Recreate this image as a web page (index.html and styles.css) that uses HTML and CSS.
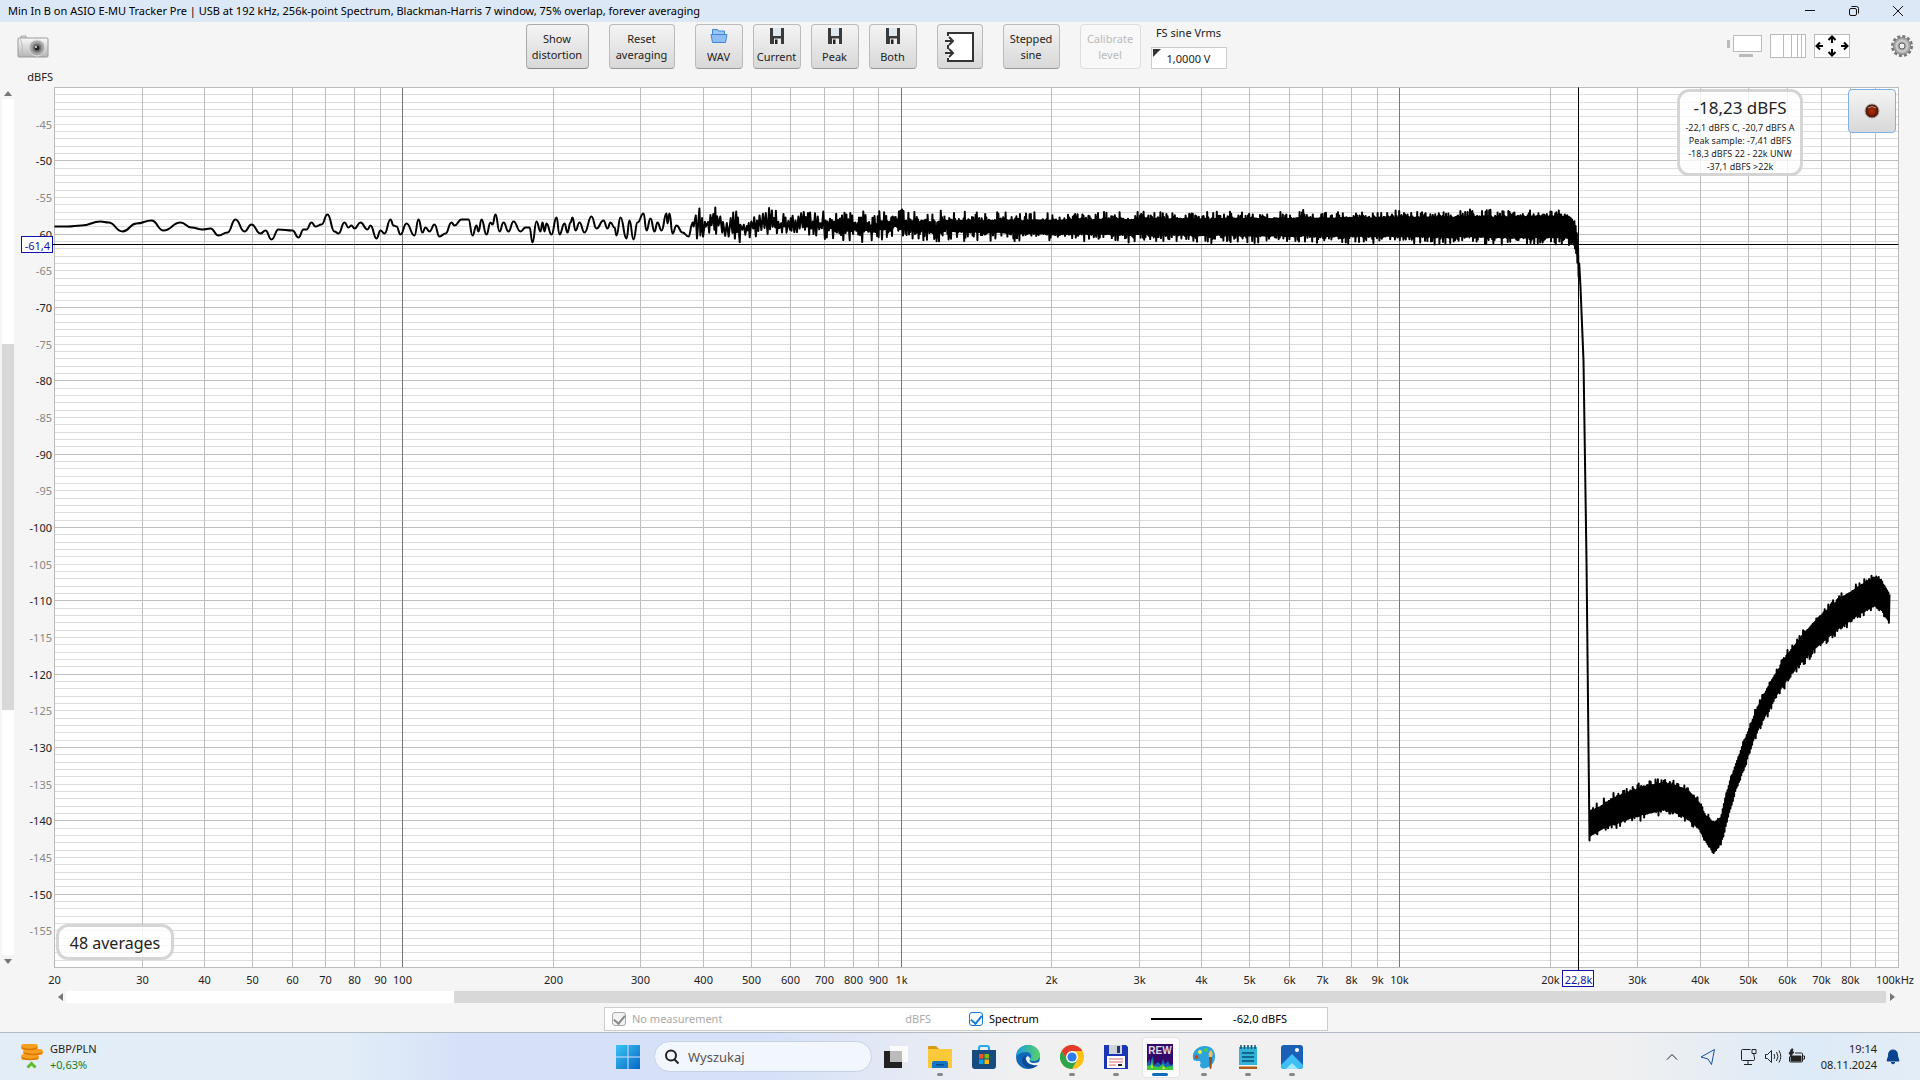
FILE: index.html
```html
<!DOCTYPE html>
<html lang="pl">
<head>
  <meta charset="UTF-8" />
  <meta name="viewport" content="width=device-width, initial-scale=1" />
  <title>RTA</title>
  <link rel="stylesheet" href="styles.css">
</head>
<body>
  <header class="titlebar">
    <span class="title">Min In B on ASIO E-MU Tracker Pre | USB at 192 kHz, 256k-point Spectrum, Blackman-Harris 7 window, 75% overlap, forever averaging</span>
    <div class="win-controls">
      <button aria-label="Minimise"><svg width="12" height="12"><path d="M1 5.5h10"/></svg></button>
      <button aria-label="Restore"><svg width="12" height="12"><rect x="1.5" y="3.5" width="7" height="7" rx="1.5"/><path d="M3.5 1.5h5a2 2 0 0 1 2 2v5"/></svg></button>
      <button aria-label="Close"><svg width="12" height="12"><path d="M1 1l10 10M11 1L1 11"/></svg></button>
    </div>
  </header>

  <div class="toolbar">
    <button class="plain camera" aria-label="Capture image">
      <svg width="32" height="24" viewBox="0 0 32 24">
        <defs><linearGradient id="cam" x1="0" y1="0" x2="0" y2="1"><stop offset="0" stop-color="#fafafa"/><stop offset="1" stop-color="#b4b4b4"/></linearGradient></defs>
        <path d="M4 3V1h5v2" fill="#ddd" stroke="#aaa"/>
        <rect x="1" y="3" width="30" height="19" rx="1" fill="url(#cam)" stroke="#999"/>
        <path d="M3 4c3 5 3 11 1 17" fill="none" stroke="#bbb"/>
        <circle cx="20" cy="13" r="8" fill="#aaa" stroke="#ddd"/>
        <circle cx="20" cy="13" r="5" fill="#777" stroke="#999"/>
        <circle cx="20" cy="13" r="2.5" fill="#222"/><circle cx="19" cy="12" r="1" fill="#eee"/>
      </svg>
    </button>

    <div class="tools">
      <button class="btn w-63 lit">Show<br>distortion</button>
      <button class="btn w-66">Reset<br>averaging</button>
      <div class="group">
        <button class="btn w-48">
          <svg width="18" height="16" viewBox="0 0 18 16"><path d="M2.500 7V1.500h5l1 1.500h6v4" fill="#9cc5f5" stroke="#3f87d8"/><path d="M1 6.500h16l-1.500 8h-13z" fill="#8fbcf3" stroke="#3f87d8"/></svg>
          WAV
        </button>
        <button class="btn w-48"><svg width="16" height="16"><use href="#save"/></svg>Current</button>
        <button class="btn w-48"><svg width="16" height="16"><use href="#save"/></svg>Peak</button>
        <button class="btn w-48"><svg width="16" height="16"><use href="#save"/></svg>Both</button>
      </div>
      <button class="btn w-46" aria-label="Input options">
        <svg width="32" height="32" viewBox="0 0 32 32" fill="none" stroke="#333" stroke-width="2">
          <path d="M4 2h25v28H4z" fill="#fff" stroke="none"/>
          <path d="M4 5V2h25v28H4v-3M4 14v4"/>
          <path d="M1 10h8M5 6l4 4-4 4M1 22h8M5 18l4 4-4 4"/>
        </svg>
      </button>
      <button class="btn w-57">Stepped<br>sine</button>
      <button class="btn w-61" disabled>Calibrate<br>level</button>
      <div class="field">
        <label for="fs">FS sine Vrms</label>
        <div class="spin"><input id="fs" type="text" value="1,0000 V"></div>
      </div>
    </div>

    <div class="views">
      <button class="plain" aria-label="Scrollbars">
        <svg width="35" height="24" viewBox="0 0 35 24"><rect x="6.500" y="1.500" width="28" height="16" fill="#fff" stroke="#bbb"/><path d="M0 6h3v8H0zM12 20h14v3H12z" fill="#bbb"/></svg>
      </button>
      <button class="plain" aria-label="Frequency axis">
        <svg width="36" height="24" viewBox="0 0 36 24" stroke="#bbb"><rect x=".5" y=".5" width="35" height="23" fill="#fff"/><path d="M13.500 0v24M21.500 0v24M27.500 0v24M31.500 0v24"/></svg>
      </button>
      <button class="plain" aria-label="Graph limits">
        <svg width="36" height="24" viewBox="0 0 36 24"><rect x=".5" y=".5" width="35" height="23" fill="#fff" stroke="#bbb"/>
          <path d="M18 9V3M14.500 6L18 2.500 21.500 6M18 15v6M14.500 18l3.500 3.500 3.500-3.500M9 12H3M6 8.500L2.500 12 6 15.500M27 12h6M30 8.500l3.500 3.500-3.500 3.500" fill="none" stroke="#000" stroke-width="2"/></svg>
      </button>
      <button class="plain gear" aria-label="Settings">
        <svg width="24" height="24" viewBox="0 0 24 24">
          <circle cx="12" cy="12" r="9.500" fill="none" stroke="#777" stroke-width="3" stroke-dasharray="3 1.970"/>
          <circle cx="12" cy="12" r="8.500" fill="#a8a8a8" stroke="#888"/>
          <circle cx="12" cy="12" r="5.500" fill="none" stroke="#ccc" stroke-width="2"/>
          <circle cx="12" cy="12" r="3" fill="#eee" stroke="#666"/>
        </svg>
      </button>
    </div>
  </div>

  <main>
    <div class="vscroll">
      <button class="plain" aria-label="Scroll up"><svg width="8" height="5"><path d="M0 5l4-5 4 5z"/></svg></button>
      <div class="track"><div class="thumb"></div></div>
      <button class="plain" aria-label="Scroll down"><svg width="8" height="5"><path d="M0 0h8L4 5z"/></svg></button>
    </div>
    <div class="graph">
      <svg id="plot"></svg>
      <div class="readout">
        <strong>-18,23 dBFS</strong>
        <span>-22,1 dBFS C, -20,7 dBFS A</span>
        <span>Peak sample: -7,41 dBFS</span>
        <span>-18,3 dBFS 22 - 22k UNW</span>
        <span>-37,1 dBFS &gt;22k</span>
      </div>
      <button class="record" aria-label="Record">
        <svg width="16" height="16"><defs><radialGradient id="led"><stop offset="0" stop-color="#b03008"/><stop offset=".6" stop-color="#7d1c04"/><stop offset="1" stop-color="#3a0c02"/></radialGradient></defs><circle cx="8" cy="8" r="7" fill="url(#led)" stroke="#aaa"/><path d="M4 5q4-3 8 0" stroke="#a98" fill="none"/></svg>
      </button>
      <div class="averages">48 averages</div>
    </div>
  </main>

  <div class="hscroll">
    <button class="plain" aria-label="Scroll left"><svg width="5" height="8"><path d="M5 0v8L0 4z"/></svg></button>
    <div class="track"><div class="thumb"></div></div>
    <button class="plain" aria-label="Scroll right"><svg width="5" height="8"><path d="M0 0v8l5-4z"/></svg></button>
  </div>

  <div class="legend">
    <div class="trace off">
      <input type="checkbox" id="t1" checked disabled><label for="t1">No measurement</label>
      <span class="value">dBFS</span>
    </div>
    <div class="trace">
      <input type="checkbox" id="t2" checked><label for="t2">Spectrum</label>
      <i class="sample"></i>
      <span class="value">-62,0 dBFS</span>
    </div>
  </div>

  <footer class="taskbar">
    <a class="widget" href="#">
      <svg width="24" height="26" viewBox="0 0 24 26">
        <g fill="#f6a01e"><rect x="1" y="0" width="17" height="6" rx="3"/><rect x="3" y="5" width="20" height="6" rx="3"/><rect x="1" y="10" width="18" height="6" rx="3"/></g>
        <path d="M2 4q8 3 15 0M4 9q9 3 18 0M2 14q8 3 16 0" stroke="#dd7808" fill="none" stroke-width="1.500"/>
        <path d="M7.500 23.500l4-4 4 4" stroke="#5fbd2c" stroke-width="3" fill="none"/>
      </svg>
      <span>GBP/PLN<br><b>+0,63%</b></span>
    </a>

    <nav class="apps">
      <button aria-label="Start">
        <svg width="24" height="24"><defs><linearGradient id="win" x1="0" y1="0" x2="1" y2="1"><stop offset="0" stop-color="#3cc3f5"/><stop offset="1" stop-color="#0568c4"/></linearGradient></defs><path d="M0 0h11.500v11.500H0zM12.500 0H24v11.500H12.500zM0 12.500h11.500V24H0zM12.500 12.500H24V24H12.500z" fill="url(#win)"/></svg>
      </button>
      <label class="search">
        <svg width="16" height="16" fill="none" stroke="#222" stroke-width="2"><circle cx="7" cy="6.500" r="5"/><path d="M10.500 10.500l4 4"/></svg>
        <input type="text" placeholder="Wyszukaj" aria-label="Wyszukaj">
      </label>
      <button aria-label="Task view">
        <svg width="24" height="24"><path d="M0 6h18v17H0z" fill="#222"/><path d="M6 1h18v16H6z" fill="#fafafa"/><path d="M6 6h12v11H6z" fill="#bbb"/></svg>
      </button>
      <button class="open" aria-label="Explorer">
        <svg width="24" height="24"><path d="M0 2q0-1 1-1h7l3 3H0z" fill="#d79a10"/><path d="M0 4h23q1 0 1 1v17q0 1-1 1H1q-1 0-1-1z" fill="#fbc93a"/><path d="M4 23v-5q0-2 2-2h12q2 0 2 2v5z" fill="#1674c4"/><path d="M8 19h8v1.500H8z" fill="#0a4d8c"/></svg>
      </button>
      <button aria-label="Store">
        <svg width="24" height="24"><path d="M7 6V3q0-2 2-2h6q2 0 2 2v3" fill="none" stroke="#25a9e8" stroke-width="2"/><path d="M0 5h24v16q0 3-3 3H3q-3 0-3-3z" fill="#164b80"/><path d="M7 9h4.500v4.500H7z" fill="#f25022"/><path d="M12.500 9H17v4.500h-4.500z" fill="#7fba00"/><path d="M7 14.500h4.500V19H7z" fill="#00a4ef"/><path d="M12.500 14.500H17V19h-4.500z" fill="#ffb900"/></svg>
      </button>
      <button aria-label="Edge">
        <svg width="24" height="24"><defs><linearGradient id="edg"><stop offset="0" stop-color="#1a9de0"/><stop offset="1" stop-color="#57d26a"/></linearGradient></defs><circle cx="12" cy="12" r="12" fill="#1267b8"/><path d="M0 12C0 5 5 0 12 0s12 5 12 10c0 4-3 6-7 6-3 0-4-1-3-2 3-4 0-7-4-7C5 7 1 10 0 12z" fill="url(#edg)"/><path d="M10 10c-3 6 2 12 12 9 1-1 1 0 0 1-4 5-15 4-16-4 0-3 1-5 4-6z" fill="#0c4a94"/><path d="M14 14c-2 4 4 5 9 3v3c-6 1-12-1-13-6 0-3 3-4 4 0z" fill="#f0f3f8"/></svg>
      </button>
      <button class="open" aria-label="Chrome">
        <svg width="24" height="24"><circle cx="12" cy="12" r="12" fill="#fbc116"/><path d="M1.600 6A12 12 0 0 1 22.400 6H12l-5 9z" fill="#e33b2e"/><path d="M1.600 6A12 12 0 0 0 12 24l5.200-9H7z" fill="#2da44e"/><circle cx="12" cy="12" r="6" fill="#fff"/><circle cx="12" cy="12" r="4.600" fill="#2b7de9"/></svg>
      </button>
      <button class="open" aria-label="Total Commander">
        <svg width="24" height="24"><path d="M0 0h22l2 2v22H0z" fill="#1b35b5"/><path d="M5 0h13v9H5z" fill="#cdd3dd"/><path d="M13 1h3v7h-3z" fill="#28366e"/><path d="M3 11h18v12H3z" fill="#fff"/><path d="M5 14h14M5 17h14M5 20h7" stroke="#d66"/><path d="M14 20h4" stroke="#222" stroke-width="2"/></svg>
      </button>
      <button class="open active" aria-label="REW">
        <svg width="26" height="26"><path d="M0 0h26v26H0z" fill="#35096b"/><path d="M0 26v-7l3-4v5l3-8 1 9 4-3 3 3 2-6 2 5 3-3 2 4 3-1v6z" fill="#1566b8"/><path d="M0 26v-4l4-1 1-7 1 8 6 1 4-3 2 3 8-1v4z" fill="#42c83c"/><path d="M4 24l1-5 1 5zM15 25l2-3 1 3z" fill="#e8e02a"/><text x="13" y="10" text-anchor="middle" class="rew">REW</text></svg>
      </button>
      <button class="open" aria-label="Paint">
        <svg width="24" height="24"><path d="M13 1C5 1 0 7 1 13c0 3 3 3 5 3 3 0 3 2 2 4 0 3 3 4 6 3 6-2 9-6 9-12 0-6-4-10-10-10z" fill="#2ba3dc"/><circle cx="8" cy="7" r="2" fill="#e8f04a"/><circle cx="14" cy="5" r="2" fill="#52c94b"/><circle cx="4.500" cy="12" r="2" fill="#c9471c"/><path d="M19 5c2 2 2 5 1 7h-3c-1-3 0-5 2-7z" fill="#f0bd68"/><path d="M17 12h3l-.5 11q-1 2-2 0z" fill="#9a4c1c"/></svg>
      </button>
      <button class="open" aria-label="Notepad">
        <svg width="24" height="24"><path d="M3 2h18v19H3z" fill="#32b4d8"/><path d="M3 21h18v3H3z" fill="#b05d1a"/><path d="M3 20h18v1.500H3z" fill="#f2f2f2"/><path d="M5 0v4M8.500 0v4M12 0v4M15.500 0v4M19 0v4" stroke="#154f70" stroke-width="1.500"/><path d="M6 8h12M6 12h12M6 16h12" stroke="#11658a" stroke-width="2"/></svg>
      </button>
      <button class="open" aria-label="Photos">
        <svg width="24" height="24"><rect x="1" y="0" width="22" height="24" rx="3" fill="#1c5fb8"/><path d="M1 20L12 9l11 11q0 4-3 4H4q-3 0-3-4z" fill="#3fc0f5"/><path d="M12 18l-6 6h12z" fill="#a6e6ff"/><circle cx="17" cy="5" r="2" fill="#fff"/></svg>
      </button>
    </nav>

    <div class="tray">
      <button aria-label="Hidden icons"><svg width="12" height="8"><path d="M1 6.500l5-5 5 5"/></svg></button>
      <button aria-label="Location"><svg width="16" height="18" class="blue"><path d="M14.500 1.500L1 9l7 2 3.500 5.500z"/></svg></button>
      <div class="quick">
        <svg width="18" height="18"><path d="M10.500 1.500h-8q-1 0-1 1v9q0 1 1 1h11q1 0 1-1v-3M8 12.500v4M4 16.500h8M12 1.500h4v4h-4zM14 5.500v3"/></svg>
        <svg width="18" height="18"><path d="M1.500 6.500h2l4-4v12l-4-4h-2zM10 6q1.500 2.500 0 5M12.500 4q3 4.500 0 9M15 2.500q3.500 6 0 12"/></svg>
        <svg width="18" height="18"><path d="M1.500 9v4q0 1 1 1h11q1 0 1-1V6q0-1-1-1H7M14.500 8h2v3h-2"/><path d="M3 8h10v5H3z" fill="#222"/><path d="M3.500 1L1 6h2l-1 3 4-5H4l1-3z" fill="#222"/></svg>
      </div>
      <time>19:14<br>08.11.2024</time>
      <button aria-label="Notifications"><svg width="14" height="16" class="bell"><path d="M7 1C3 1 2.500 4 2.500 7L1 12h12l-1.500-5C11.500 4 11 1 7 1zM5 13.500h4L7 15z"/></svg></button>
    </div>
  </footer>

  <svg class="defs">
    <symbol id="save" viewBox="0 0 16 16"><path d="M1 0h14v16H1z" fill="#3a3a3a"/><path d="M4 0h8v8H4z" fill="#dfe8ee"/><path d="M5 10.500h7V16H5z" fill="#eee"/><path d="M6 11.500h2.500V16H6z" fill="#222"/></symbol>
  </svg>

  <script>
    (function(){
      const svg = document.getElementById("plot");
      const pad = { left: 40.5, right: 21.5, top: 17.5, bottom: 23.5 };
      const fMin = 20, fMax = 100000, dbTop = -40, dbBottom = -160;
      const cursor = { f: 22800, db: -61.4 };

      // Trace samples, on an 1844 x 880 plot
      const low = [0,139,13,139,27,138,46,134,54,135,68,144,82,136,97,133,109,143,126,135,137,140,148,142,156,141,
        164,148,173,145,181,132,190,144,197,137,206,146,211,143,217,152,224,142,238,143,244,150,249,142,252,142,
        257,135,261,139,267,137,273,127,280,144,284,146,290,135,294,140,297,138,300,141,306,135,313,142,316,138,
        322,151,326,143,330,146,336,132,339,138,342,139,346,147,352,136,360,148,364,132,368,145,371,140,375,144,
        380,137,385,149,391,146,397,135,400,138,407,132,414,132,418,148,422,138,424,144,427,132,432,147,436,135,
        438,137,441,127,445,144,449,135,454,144,459,134,466,144,471,140,475,140,478,155,482,134,486,144,488,135,
        490,144,492,136,497,147,502,130,505,147,510,136,513,145,516,135,518,130,521,143,525,135,530,145,537,129,
        542,141,549,133,553,141,556,135,560,140,562,148,566,130,572,151,575,133,579,152,583,135,589,126,592,143,
        596,131,600,144,603,135,607,143,612,126,613,136,615,126,618,146,622,138,628,145,634,149,638,136];
      // x, top, bottom, spike length
      const band = [[638,136,140,14],[690,136,140,14],[760,136,141,13],[850,135,142,11],[905,134,144,10],[1000,133,146,8],
        [1100,132,147,8],[1250,131,148,8],[1400,130,149,8],[1512,129,150,7],[1517,131,152,6],[1521,138,160,4],
        [1523,150,176,2],[1525,180,200,0]];
      const drop = [[1526,200],[1529,273],[1532,473],[1535,753]];
      const high = [[1535,724,748,6],[1547,719,741,7],[1559,711,736,6],[1580,703,729,6],[1595,698,725,6],[1609,696,722,6],
        [1622,699,725,6],[1634,704,731,5],[1645,716,742,4],[1652,730,754,4],[1659,736,766,4],[1667,730,754,3],
        [1672,706,735,3],[1680,680,705,3],[1689,656,682,3],[1699,630,652,5],[1706,614,637,5],[1719,590,612,6],
        [1735,565,588,6],[1752,543,568,6],[1769,526,553,5],[1785,512,540,5],[1802,501,528,5],[1820,491,518,4],
        [1827,494,522,4],[1835,507,535,3]];

      // Repeatable noise, so that a resize keeps the trace
      let seed = 1;
      function rnd(){
        seed = (seed * 16807) % 2147483647;
        return seed / 2147483647;
      }

      function noise(env, step){
        const pts = [];
        let i = 0, drift = 0;
        for(let x = env[0][0], up = true; x <= env[env.length-1][0]; x += step(x), up = !up){
          while(i < env.length-2 && x > env[i+1][0]) i++;
          const a = env[i], b = env[i+1], t = (x - a[0]) / (b[0] - a[0]);
          const mix = k => a[k] + (b[k] - a[k]) * t;
          const spike = mix(3) * Math.pow(rnd(), x < 850 ? 2 : 3);
          // the sparse end wanders, the dense end holds level
          drift = drift * .85 + (rnd() - .5) * (x < 900 ? 3 : .5);
          pts.push([x, drift + (up ? mix(1) - spike : mix(2) + spike)]);
        }
        return pts;
      }

      function draw(){
        seed = 77;
        const w = svg.clientWidth, h = svg.clientHeight;
        const pw = w - pad.left - pad.right, ph = h - pad.top - pad.bottom;
        const fx = f => pad.left + pw * Math.log10(f / fMin) / Math.log10(fMax / fMin);
        const dy = db => pad.top + ph * (dbTop - db) / (dbTop - dbBottom);
        const snap = v => Math.floor(v) + .5;
        const sx = x => (pad.left + x * pw / 1844).toFixed(1);
        const sy = y => (pad.top + y * ph / 880).toFixed(1);
        const right = pad.left + pw, bottom = pad.top + ph;
        let out = `<rect x="${pad.left}" y="${pad.top}" width="${pw}" height="${ph}" class="area"/>`;
        let labels = "";

        // Level lines
        for(let db = dbTop; db >= dbBottom; db--){
          const y = snap(dy(db));
          out += `<path d="M${pad.left} ${y}H${right}" class="${db % 10 ? "minor" : "major"}"/>`;
          if(db % 5 === 0 && db < dbTop && db > dbBottom)
            labels += `<text x="38" y="${y+4}" class="lv ${db % 10 ? "dim" : ""}">${db}</text>`;
        }
        // Frequency lines
        for(let dec = 10; dec < fMax; dec *= 10){
          for(let n = 1; n < 10; n++){
            const f = n * dec;
            if(f < fMin) continue;
            const x = snap(fx(f));
            out += `<path d="M${x} ${pad.top}V${bottom}" class="${n === 1 ? "decade" : "major"}"/>`;
            if(f !== 90000) labels += `<text x="${x}" y="${bottom+16}" class="fr">${f < 1000 ? f : f/1000 + "k"}</text>`;
          }
        }
        labels += `<text x="${w-6}" y="${bottom+16}" class="lv">100kHz</text><text x="39" y="11" class="lv">dBFS</text>`;
        out += `<rect x="${pad.left}" y="${pad.top}" width="${pw}" height="${ph}" class="frame"/>`;

        // Trace
        let d = `M${sx(low[0])} ${sy(low[1])}`;
        for(let i = 2; i < low.length; i += 2){
          const m = sx((low[i-2] + low[i]) / 2);
          d += `C${m} ${sy(low[i-1])} ${m} ${sy(low[i+1])} ${sx(low[i])} ${sy(low[i+1])}`;
        }
        const rest = noise(band, x => x < 850 ? (.5 + rnd()) * (1.6 - (x - 638) / 260) : .6)
          .concat(drop, noise(high, () => .6));
        d += rest.map(p => `L${sx(p[0])} ${sy(p[1])}`).join("");
        out += `<path d="${d}" class="spectrum"/>`;

        // Cursor
        const cx = snap(fx(cursor.f)), cy = snap(dy(cursor.db));
        out += `<path d="M${cx} ${pad.top}V${bottom+3}M39 ${cy}H${right}" class="cross"/>` + labels;
        out += `<rect x="7.5" y="${cy-8}" width="31" height="16" class="tag"/><text x="36" y="${cy+5}" class="lv blue">-61,4</text>`;
        out += `<rect x="${cx-16}" y="${bottom+3}" width="31" height="16" class="tag"/><text x="${cx}" y="${bottom+16}" class="fr blue">22,8k</text>`;
        svg.innerHTML = out;
      }

      draw();
      window.addEventListener("resize", draw);
    })();
  </script>
</body>
</html>
```
FILE: styles.css
```css
:root {
  --bg: #f5f5f5;
  --text: #222;
  --line: #bbb;
  --blue: #1212a8;
}
* { box-sizing: border-box; }
body {
  margin: 0; min-height: 100vh;
  display: flex; flex-direction: column;
  background: var(--bg); color: var(--text);
  font: 11px/16px "Noto Sans", "Open Sans", sans-serif;
}
button, input { font: inherit; color: inherit; }
button { padding: 0; }
.defs { display: none; }
.plain { background: none; border: none; display: flex; align-items: center; justify-content: center; }

.titlebar {
  height: 22px; padding-left: 8px;
  display: flex; align-items: center; justify-content: space-between;
  background: #dce8f6; color: #000;
}
.win-controls { display: flex; }
.win-controls button {
  width: 44px; height: 22px; background: none; border: none;
  display: flex; align-items: center; justify-content: center;
}
.win-controls svg { fill: none; stroke: #111; }

.toolbar {
  height: 48px; padding: 0 6px 0 17px;
  display: flex; justify-content: space-between; align-items: flex-start;
}
.camera { margin-top: 13px; }
.tools { display: flex; gap: 20px; padding-top: 2px; }
.group { display: flex; gap: 10px; }
.btn {
  height: 45px; border: 1px solid #bbb; border-bottom-color: #999; border-radius: 4px;
  background: linear-gradient(#f4f4f4, #d8d8d8);
  display: flex; flex-direction: column; align-items: center; justify-content: center;
}
.btn svg { flex: none; }
.group .btn { justify-content: space-between; padding: 3px 0 3px; }
.btn.lit { border-color: #aaa; border-bottom-color: #888; }
.btn:disabled { color: #bbb; background: #f8f8f8; border-color: #ddd; }
.w-46 { width: 46px; }
.w-48 { width: 48px; }
.w-57 { width: 57px; }
.w-61 { width: 61px; }
.w-63 { width: 63px; }
.w-66 { width: 66px; }
.field { width: 76px; margin-left: -10px; text-align: center; }
.field label { display: block; height: 21px; padding-top: 1px; }
.spin { position: relative; margin-top: 2px; }
.spin::before {
  content: ""; position: absolute; left: 2px; top: 2px;
  border: 4px solid transparent; border-top-color: #333; border-left-color: #333;
}
.spin input {
  width: 100%; height: 22px; padding: 0;
  border: 1px solid #ccc; background: #fff; text-align: center;
}
.views { display: flex; gap: 8px; padding: 12px 0 0 24px; }
.gear { margin-left: 32px; }

main { flex: 1; display: flex; padding-left: 2px; }
.track { flex: 1; background: #fff; }
.thumb { background: #d8d8d8; }
.vscroll, .hscroll { display: flex; }
.vscroll button, .hscroll button { width: 12px; height: 12px; }
.vscroll svg, .hscroll svg { fill: #777; }
.vscroll { width: 12px; flex-direction: column; margin: 17px 0 24px; }
.vscroll .track { display: flex; flex-direction: column; }
.vscroll .track::before { content: ""; height: 28.6%; }
.vscroll .thumb { height: 42.8%; }
.hscroll { margin: 0 22px 0 54px; }
.hscroll .thumb { height: 12px; margin-left: 21.3%; }

.graph { flex: 1; position: relative; min-height: 400px; }
#plot { position: absolute; width: 100%; height: 100%; }
#plot path { fill: none; }
#plot text { fill: var(--text); }
#plot .area { fill: #fff; }
#plot .frame { fill: none; stroke: #bbb; }
#plot .minor { stroke: #ddd; }
#plot .major { stroke: #bebebe; }
#plot .decade { stroke: #777; }
#plot .spectrum { stroke: #000; stroke-width: 2; stroke-linejoin: round; }
#plot .cross { stroke: #000; }
#plot .tag { fill: #fff; stroke: var(--blue); }
#plot .lv { text-anchor: end; }
#plot .fr { text-anchor: middle; }
#plot .dim { fill: #888; }
#plot .blue { fill: var(--blue); }

.readout, .averages {
  position: absolute; background: rgba(255,255,255,.8);
  border: 3px solid rgba(190,190,190,.65); border-radius: 12px;
}
.readout {
  top: 19px; right: 117px; width: 126px; height: 87px; padding-top: 3px;
  display: flex; flex-direction: column; align-items: center;
  font-size: 9px; line-height: 13px; white-space: nowrap;
}
.readout strong { font-size: 17px; font-weight: normal; line-height: 26px; }
.averages {
  left: 42px; bottom: 31px; width: 118px; height: 36px;
  text-align: center; font-size: 16px; line-height: 32px;
}
.record {
  position: absolute; top: 19px; right: 24px; width: 48px; height: 44px;
  border: 1px solid #7fb0ee; border-radius: 4px;
  background: linear-gradient(#f4f4f4, #d8d8d8);
  display: flex; align-items: center; justify-content: center;
}

.legend {
  width: 724px; height: 24px; margin: 4px auto 1px; padding: 0 40px 0 7px;
  position: relative; left: 6px;
  display: flex; background: #fff; border: 1px solid #ccc; color: #000;
}
.trace { flex: 1; display: flex; align-items: center; gap: 6px; }
.trace:first-child { flex: none; width: 357px; padding-right: 38px; }
.trace.off { color: #aaa; }
.trace .value { margin-left: auto; }
.trace input {
  appearance: none; width: 14px; height: 14px; margin: 0;
  border: 1px solid #1678d8; border-radius: 3px; background: #fff;
  display: flex; align-items: center; justify-content: center;
}
.trace input::after {
  content: ""; width: 5px; height: 9px; margin-bottom: 2px;
  border: solid #1678d8; border-width: 0 2px 2px 0; transform: rotate(40deg);
}
.trace input:disabled { border-color: #aaa; background: #f2f2f2; }
.trace input:disabled::after { border-color: #888; }
.sample { width: 51px; height: 2px; margin-left: 106px; background: #000; }

.taskbar {
  height: 48px; padding: 0 20px; border-top: 1px solid #b4bac2;
  display: grid; grid-template-columns: 1fr auto 1fr; align-items: center;
  background: linear-gradient(90deg, #e2edf8 0, #e2edf8 18%, #d6e1f8 24%, #d6e1f8 40%, #f0f0f1 53%, #f0f0f1 84%, #ddeaf7 94%, #e4edf6 100%);
}
.taskbar button {
  border: none; background: none;
  display: flex; align-items: center; justify-content: center;
}
.widget { display: flex; gap: 6px; align-items: center; color: inherit; text-decoration: none; }
.widget b { color: #16801c; font-weight: normal; }
.apps { display: flex; align-items: center; height: 46px; }
.apps button { width: 44px; height: 40px; position: relative; }
.open::after {
  content: ""; position: absolute; bottom: 1px; left: 19px;
  width: 6px; height: 3px; border-radius: 2px; background: #888;
}
.apps .active::before {
  content: ""; position: absolute; z-index: -1; top: 0; left: 4px; width: 36px; height: 39px;
  background: #fbfbfc; border: 1px solid #e4e4e6; border-radius: 4px;
}
.apps .active { z-index: 0; }
.active::after { width: 16px; left: 14px; background: #0f6cbd; }
.rew { font: bold 10px "Liberation Sans", sans-serif; fill: #ddd; }
.search {
  width: 218px; height: 31px; margin: 0 2px 0 4px; padding: 0 9px;
  display: flex; align-items: center; gap: 8px;
  background: #f2f6fd; border: 1px solid #c8d2e6; border-radius: 16px;
}
.search input { flex: 1; min-width: 0; padding: 0; border: none; outline: none; background: none; font-size: 13px; }
.search input::placeholder { color: #555; opacity: 1; }
.tray { display: flex; align-items: center; justify-content: flex-end; }
.tray svg { fill: none; stroke: #222; }
.tray svg.blue { stroke: #1b4f9c; }
.tray svg.bell { fill: #0a4391; stroke: #0a4391; }
.tray button:first-child { margin-right: 22px; }
.tray button:nth-child(2) { margin-right: 24px; }
.quick { display: flex; gap: 6px; }
.tray time { width: 62px; margin: 0 9px 0 9px; text-align: right; }
```
